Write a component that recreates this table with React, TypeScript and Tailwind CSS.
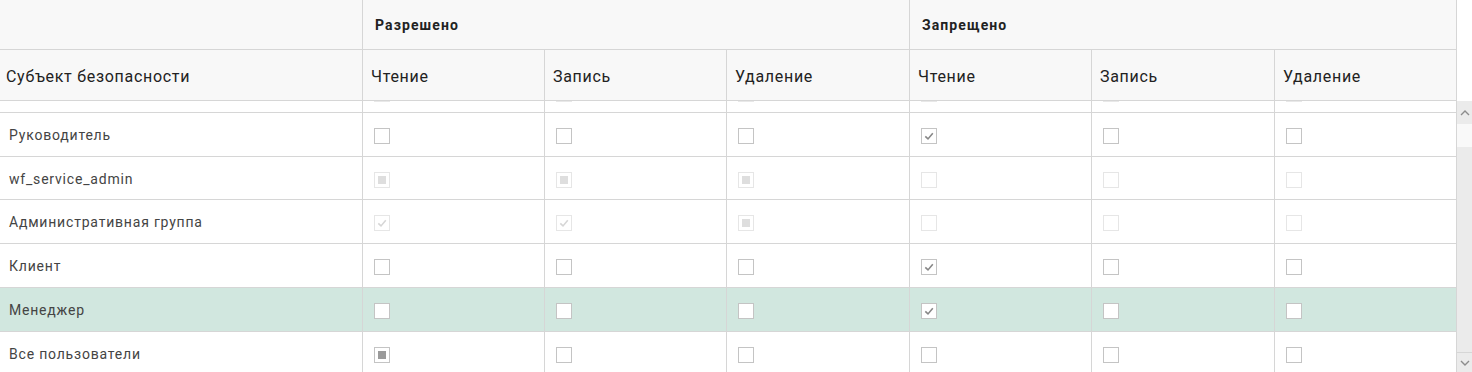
type Box = "u" | "c" | "i" | "du" | "dc" | "di";

const rows: { name: string; boxes: Box[]; active?: boolean }[] = [
  { name: "Руководитель", boxes: ["u", "u", "u", "c", "u", "u"] },
  { name: "wf_service_admin", boxes: ["di", "di", "di", "du", "du", "du"] },
  { name: "Административная группа", boxes: ["dc", "dc", "di", "du", "du", "du"] },
  { name: "Клиент", boxes: ["u", "u", "u", "c", "u", "u"] },
  { name: "Менеджер", boxes: ["u", "u", "u", "c", "u", "u"], active: true },
  { name: "Все пользователи", boxes: ["i", "u", "u", "u", "u", "u"] },
];

const cols = "grid-cols-[363px_182px_182px_183px_182px_183px_182px]";
const font = { fontFamily: "Roboto, 'Noto Sans', sans-serif" };

function CheckBox({ kind }: { kind: Box }) {
  const disabled = kind.startsWith("d");
  return (
    <div
      className={
        "relative h-4 w-4 bg-white border " +
        (disabled ? "border-[#e6e6e6]" : "border-[#c4c4c4]")
      }
    >
      {(kind === "c" || kind === "dc") && (
        <svg viewBox="0 0 16 16" className="absolute -left-px -top-px h-4 w-4">
          <path
            d="M4.3 8.3 L7 10.9 L11.8 5.3"
            fill="none"
            stroke={kind === "c" ? "#878787" : "#d6d6d6"}
            strokeWidth="1.6"
          />
        </svg>
      )}
      {(kind === "i" || kind === "di") && (
        <div
          className={
            "absolute left-[3px] top-[3px] h-2 w-2 " +
            (kind === "i" ? "bg-[#9a9a9a]" : "bg-[#dedede]")
          }
        />
      )}
    </div>
  );
}

function Chevron({ up }: { up?: boolean }) {
  return (
    <svg viewBox="0 0 10 6" className="h-[6px] w-[10px]">
      <path
        d={up ? "M1 5 L5 1 L9 5" : "M1 1 L5 5 L9 1"}
        fill="none"
        stroke="#8c8c8c"
        strokeWidth="1.4"
      />
    </svg>
  );
}

export default function App() {
  return (
    <div className="flex h-[372px] w-[1472px] overflow-hidden bg-white text-[#333]" style={font}>
      <div className="w-[1457px] shrink-0">
        {/* header */}
        <div className={"grid bg-[#f8f8f8] " + cols}>
          <div className="h-[50px] border-r border-b border-[#d6d6d6]" />
          <div className="col-span-3 flex h-[50px] items-center border-r border-b border-[#d6d6d6] pl-3 pt-[2px] text-[14px] font-bold tracking-[1.1px] text-[#222]">
            Разрешено
          </div>
          <div className="col-span-3 flex h-[50px] items-center border-r border-b border-[#d6d6d6] pl-3 pt-[2px] text-[14px] font-bold tracking-[1.1px] text-[#222]">
            Запрещено
          </div>
          <div className="flex h-[51px] items-center border-r border-b border-[#d6d6d6] pl-[6px] pt-1 text-[16px] tracking-[0.7px] text-[#222]">
            Субъект безопасности
          </div>
          {["Чтение", "Запись", "Удаление", "Чтение", "Запись", "Удаление"].map((t, i) => (
            <div
              key={i}
              className="flex h-[51px] items-center border-r border-b border-[#d6d6d6] pl-2 pt-1 text-[16px] tracking-[0.7px] text-[#222]"
            >
              {t}
            </div>
          ))}
        </div>

        {/* partially scrolled row */}
        <div className={"grid " + cols}>
          <div className="h-3 border-r border-b border-[#d6d6d6]" />
          {Array.from({ length: 6 }).map((_, i) => (
            <div key={i} className="h-3 border-r border-b border-[#d6d6d6] pl-[11px]">
              <div className="h-px w-4 bg-[#e8e8e8]" />
            </div>
          ))}
        </div>

        {rows.map((r, ri) => (
          <div
            key={r.name}
            className={"grid " + cols + (r.active ? " bg-[#d1e7df]" : "")}
          >
            <div
              className={
                "flex items-center border-r border-b border-[#d6d6d6] pl-[9px] pt-[2px] text-[14px] tracking-[0.8px] text-[#444] " +
                (ri === 1 ? "h-[43px]" : "h-[44px]")
              }
            >
              {r.name}
            </div>
            {r.boxes.map((b, i) => (
              <div
                key={i}
                className={
                  "flex items-center border-r border-b border-[#d6d6d6] pl-[11px] pt-[3px] " +
                  (ri === 1 ? "h-[43px]" : "h-[44px]")
                }
              >
                <CheckBox kind={b} />
              </div>
            ))}
          </div>
        ))}
      </div>

      {/* scrollbar */}
      <div className="flex w-[15px] shrink-0 flex-col">
        <div className="h-[101px] bg-white" />
        <div className="flex h-[23px] items-center justify-center bg-[#ebebeb]">
          <Chevron up />
        </div>
        <div className="h-[23px] bg-[#f9f9f9]" />
        <div className="flex-1 bg-[#ebebeb]" />
        <div className="flex h-[20px] items-center justify-center border-t border-[#d6d6d6] bg-[#ebebeb]">
          <Chevron />
        </div>
      </div>
    </div>
  );
}
